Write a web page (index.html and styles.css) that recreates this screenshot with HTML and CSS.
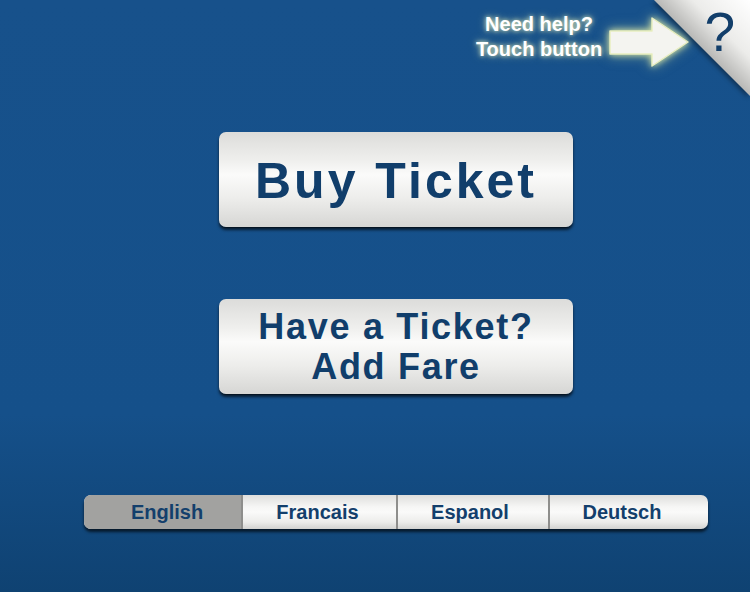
FILE: index.html
```html
<!DOCTYPE html>
<html>
<head>
<meta charset="utf-8">
<link rel="stylesheet" href="styles.css">
</head>
<body>
<div class="screen">
  <div class="help">
    <div class="help-text">Need help?<br>Touch button</div>
    <svg class="help-arrow" width="84" height="56" viewBox="0 0 84 56">
      <polygon points="2,16 44,16 44,3 80,27 44,51 44,39 2,39" fill="#f4f4f0" stroke="#e8eec0" stroke-width="1.5" stroke-linejoin="round"/>
    </svg>
    <div class="help-corner">
      <svg width="96" height="96" viewBox="0 0 96 96">
        <defs>
          <linearGradient id="cg" x1="1" y1="0" x2="0.5" y2="0.5">
            <stop offset="0" stop-color="#ffffff"/>
            <stop offset="0.6" stop-color="#ececea"/>
            <stop offset="1" stop-color="#b8b8b6"/>
          </linearGradient>
        </defs>
        <polygon points="0,0 96,0 96,96" fill="url(#cg)"/>
      </svg>
      <span class="qmark">?</span>
    </div>
  </div>

  <div class="actions">
    <button class="big-btn buy">Buy Ticket</button>
    <button class="big-btn add">Have a Ticket?<br>Add Fare</button>
  </div>

  <div class="langs">
    <div class="lang lang-en active">English</div>
    <div class="lang lang-fr">Francais</div>
    <div class="lang lang-es">Espanol</div>
    <div class="lang lang-de">Deutsch</div>
  </div>
</div>
</body>
</html>
```
FILE: styles.css
```css
* { box-sizing: border-box; }
html, body { margin: 0; padding: 0; }
body {
  width: 750px;
  height: 592px;
  overflow: hidden;
  font-family: "Liberation Sans", Arial, sans-serif;
}
.screen {
  position: relative;
  width: 750px;
  height: 592px;
  padding-left: 42px;
  background: linear-gradient(to bottom, #17518b 0%, #15508a 70%, #0f4272 100%);
  display: flex;
  flex-direction: column;
  align-items: center;
}
.help {
  position: absolute;
  top: 0;
  right: 0;
  width: 290px;
  height: 96px;
}
.help-text {
  position: absolute;
  left: 0;
  top: 12px;
  width: 158px;
  text-align: center;
  color: #ffffff;
  font-weight: bold;
  font-size: 20px;
  line-height: 25px;
  white-space: nowrap;
  text-shadow: 0 0 4px rgba(230, 240, 190, 0.9), 0 0 8px rgba(220, 235, 170, 0.6);
}
.help-arrow {
  position: absolute;
  left: 148px;
  top: 15px;
  filter: drop-shadow(0 0 3px rgba(230, 240, 170, 0.9)) drop-shadow(0 0 6px rgba(220, 235, 160, 0.5));
}
.help-corner {
  position: absolute;
  top: 0;
  right: 0;
  width: 96px;
  height: 96px;
}
.help-corner svg {
  display: block;
  filter: drop-shadow(-2px 2px 2px rgba(0,0,0,0.35));
}
.qmark {
  position: absolute;
  top: 0;
  right: 15px;
  font-size: 55px;
  line-height: 64px;
  color: #123e6a;
}
.actions {
  display: flex;
  flex-direction: column;
  align-items: center;
  gap: 72px;
  margin-top: 132px;
}
.big-btn {
  width: 354px;
  height: 95px;
  border: none;
  border-radius: 7px;
  background: linear-gradient(to bottom, #dcdcda 0%, #efefed 30%, #fbfbfa 45%, #ededeb 70%, #d6d6d4 100%);
  box-shadow: 0 3px 3px rgba(0, 0, 0, 0.65), 0 1px 0 rgba(0,0,0,0.3);
  color: #113e6b;
  font-family: "Liberation Sans", Arial, sans-serif;
  font-weight: bold;
  padding: 0;
  cursor: pointer;
}
.buy {
  font-size: 50px;
  letter-spacing: 3px;
  padding-top: 2px;
}
.add {
  font-size: 36px;
  line-height: 40px;
  letter-spacing: 1.7px;
}
.langs {
  margin-top: 101px;
  width: 624px;
  height: 34px;
  display: flex;
  border-radius: 7px;
  overflow: hidden;
  box-shadow: 0 3px 3px rgba(0, 0, 0, 0.65);
  background: linear-gradient(to bottom, #dededc 0%, #f6f6f5 35%, #fafaf9 50%, #ececea 80%, #d2d2d0 100%);
}
.lang {
  display: flex;
  align-items: center;
  justify-content: center;
  font-weight: bold;
  font-size: 20px;
  color: #133f6c;
  border-left: 2px solid #8e8e8c;
}
.lang-en { flex: 0 0 157px; border-left: none; padding-left: 9px; }
.lang-fr { flex: 0 0 155px; padding-right: 4px; }
.lang-es { flex: 0 0 152px; padding-right: 6px; }
.lang-de { flex: 1; padding-right: 14px; }
.lang.active {
  background: #a2a2a0;
}
```
